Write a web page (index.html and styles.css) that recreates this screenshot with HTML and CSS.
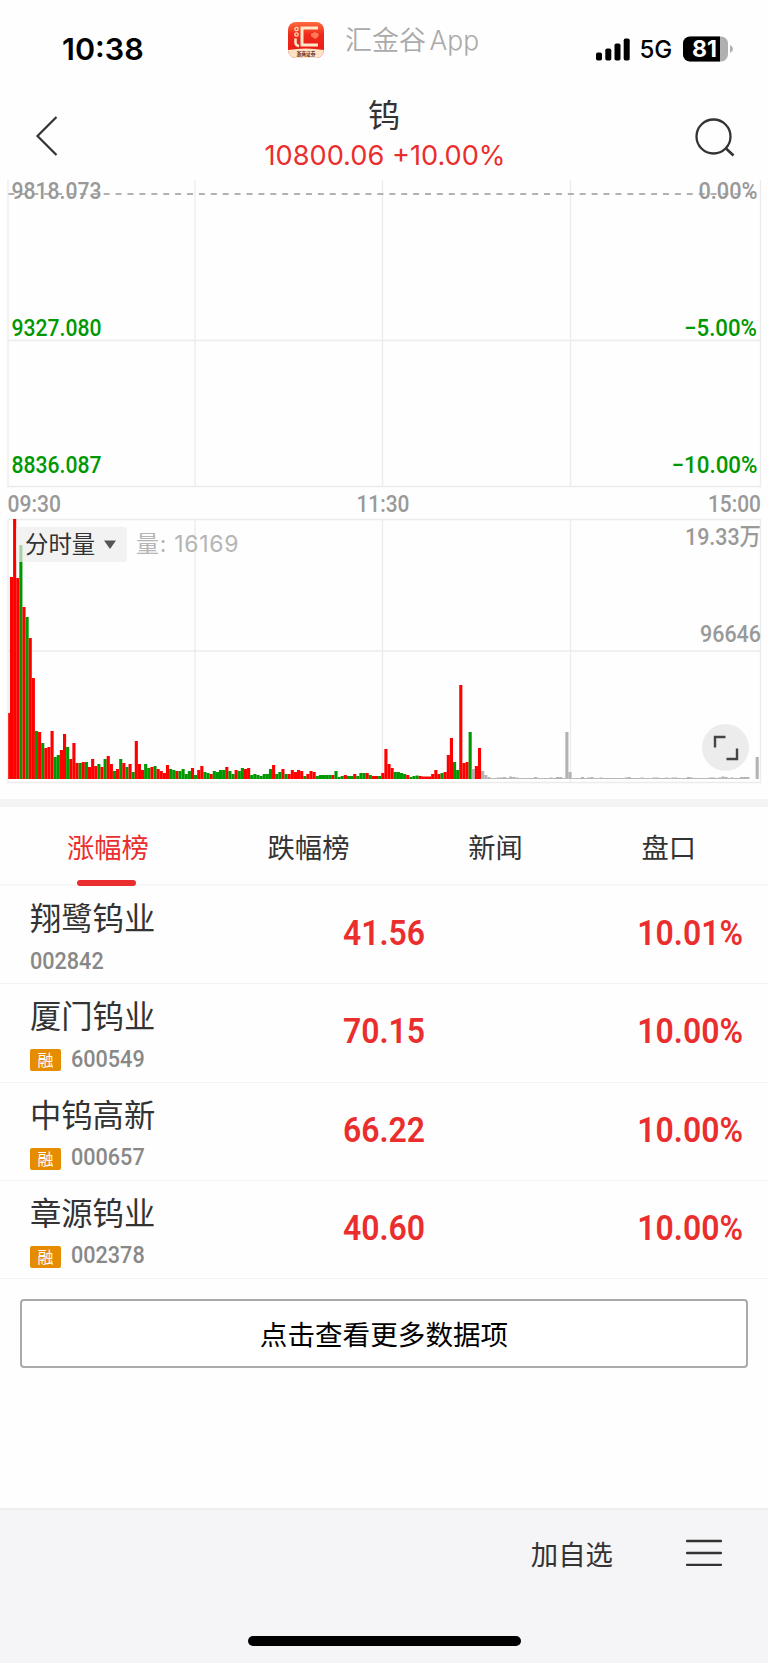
FILE: index.html
```
<!DOCTYPE html>
<html lang="zh-CN">
<head>
    <meta charset="UTF-8">
    <meta name="viewport" content="width=device-width, initial-scale=1.0">
    <title>钨</title>
    <link rel="stylesheet" href="styles.css">
</head>
<body>
    <div class="status-bar">
        <div class="clock">10:38</div>
        <div class="app-tag">
            <svg class="app-logo" width="36" height="36" viewBox="0 0 36 36">
                <defs>
                    <linearGradient id="logo-bg" x1="0" y1="0" x2="0" y2="1">
                        <stop offset="0" stop-color="#ff6a3c"/>
                        <stop offset="0.35" stop-color="#ee2a1c"/>
                        <stop offset="1" stop-color="#ea1512"/>
                    </linearGradient>
                    <clipPath id="logo-clip"><rect width="36" height="36" rx="8"/></clipPath>
                </defs>
                <g clip-path="url(#logo-clip)">
                    <rect width="36" height="36" fill="url(#logo-bg)"/>
                    <path d="M0 28 Q18 25 36 28 V36 H0 Z" fill="#fbe3c4"/>
                    <path d="M30 6 H14 V23 H30" fill="none" stroke="#ffe9c8" stroke-width="3"/>
                    <circle cx="8.500" cy="7" r="1.700" fill="none" stroke="#ffd9b5" stroke-width="1.300"/>
                    <circle cx="8.500" cy="12.500" r="1.700" fill="none" stroke="#ffd9b5" stroke-width="1.300"/>
                    <path d="M7.500 16.500 V20.500 Q7.500 23.500 11 24" fill="none" stroke="#ffe9c8" stroke-width="2.500"/>
                    <path d="M23 12 l4 -2 4 2 -1 3 -3 2 -4 -3z" fill="#ff7a58"/>
                </g>
                <text class="logo-text" x="18" y="33.800" textLength="19" lengthAdjust="spacingAndGlyphs" text-anchor="middle">浙商证券</text>
            </svg>
            <span class="app-name">汇金谷 <span>App</span></span>
        </div>
        <div class="signal">
            <svg width="34" height="23" viewBox="0 0 34 23">
                <rect x="0" y="14.500" width="6" height="8" rx="1.800"/>
                <rect x="9.300" y="10.500" width="6" height="12" rx="1.800"/>
                <rect x="18.500" y="5.500" width="6" height="17" rx="1.800"/>
                <rect x="27.700" y="0.500" width="6" height="22" rx="1.800"/>
            </svg>
            <span class="network">5G</span>
            <svg class="battery" width="50" height="26" viewBox="0 0 50 26">
                <defs>
                    <clipPath id="battery-clip"><rect x="0" y="0.500" width="45" height="25" rx="7"/></clipPath>
                </defs>
                <g clip-path="url(#battery-clip)">
                    <rect width="45" height="26" fill="#b0b0b0"/>
                    <rect width="37" height="26" fill="#000"/>
                </g>
                <path d="M47 9 Q50 10.500 50 13 Q50 15.500 47 17 Z" fill="#b0b0b0"/>
                <text class="battery-text" x="9" y="21.300" textLength="25" lengthAdjust="spacingAndGlyphs">81</text>
            </svg>
        </div>
    </div>

    <div class="nav">
        <svg width="42" height="42" viewBox="0 0 42 42">
            <path d="M21.500 2 L2.500 21 L21.500 40" fill="none" stroke="#333" stroke-width="2.200"/>
        </svg>
        <div class="nav-title">
            <h1>钨</h1>
            <div class="quote">10800.06 +10.00%</div>
        </div>
        <svg width="42" height="42" viewBox="0 0 42 42">
            <circle cx="20.500" cy="21.500" r="17" fill="none" stroke="#333" stroke-width="2.300"/>
            <path d="M32.500 33 L40.500 40.500" stroke="#333" stroke-width="2.600"/>
        </svg>
    </div>

    <div class="chart">
        <svg width="768" height="627" viewBox="0 172 768 627">
            <g class="grid">
                <path d="M8 180 V486.500 H760.500 V180 M195 180 V486.500 M382.500 180 V486.500 M570.500 180 V486.500 M8 340.500 H760.500"/>
                <path d="M8 519.500 H760.500 V782.500 H8 Z M195 519.500 V782.500 M382.500 519.500 V782.500 M570.500 519.500 V782.500 M8 651 H760.500"/>
            </g>
            <path class="base-line" d="M8.500 194 H758"/>
            <g class="axis">
                <text x="11.500" y="198.500" textLength="90" lengthAdjust="spacingAndGlyphs">9818.073</text>
                <text x="698.500" y="198.500" textLength="59" lengthAdjust="spacingAndGlyphs">0.00%</text>
                <text class="down" x="11.500" y="335.700" textLength="90" lengthAdjust="spacingAndGlyphs">9327.080</text>
                <text class="down" x="684" y="335.700" textLength="73" lengthAdjust="spacingAndGlyphs">−5.00%</text>
                <text class="down" x="11.500" y="472.700" textLength="90" lengthAdjust="spacingAndGlyphs">8836.087</text>
                <text class="down" x="671.500" y="472.700" textLength="86" lengthAdjust="spacingAndGlyphs">−10.00%</text>
                <text x="7.500" y="512" textLength="53.500" lengthAdjust="spacingAndGlyphs">09:30</text>
                <text x="356.500" y="512" textLength="53" lengthAdjust="spacingAndGlyphs">11:30</text>
                <text x="708" y="512" textLength="53" lengthAdjust="spacingAndGlyphs">15:00</text>
                <text x="685" y="544.700" textLength="76" lengthAdjust="spacingAndGlyphs">19.33万</text>
                <text x="700" y="641.700" textLength="61" lengthAdjust="spacingAndGlyphs">96646</text>
            </g>
            <g id="volume"></g>
        </svg>
        <div class="volume-head">
            <div class="volume-select"><span>分时量</span>
                <svg width="12" height="9" viewBox="0 0 12 9"><path d="M0 0.500 H12 L6 9 Z" fill="#555"/></svg>
            </div>
            <div class="volume-value">量: <span>16169</span></div>
        </div>
        <div class="expand">
            <svg width="26" height="26" viewBox="0 0 26 26">
                <path d="M2 12.500 V2 H12.500 M24 13.500 V24 H13.500" fill="none" stroke="#444" stroke-width="2.400"/>
            </svg>
        </div>
    </div>

    <div class="tabs">
        <div class="tab active">涨幅榜</div>
        <div class="tab">跌幅榜</div>
        <div class="tab">新闻</div>
        <div class="tab">盘口</div>
    </div>

    <div class="stocks">
        <div class="stock">
            <div class="info">
                <div class="name">翔鹭钨业</div>
                <div class="code"><span class="num">002842</span></div>
            </div>
            <div class="price num">41.56</div>
            <div class="change num">10.01%</div>
        </div>
        <div class="stock">
            <div class="info">
                <div class="name">厦门钨业</div>
                <div class="code"><span class="tag">融</span><span class="num">600549</span></div>
            </div>
            <div class="price num">70.15</div>
            <div class="change num">10.00%</div>
        </div>
        <div class="stock">
            <div class="info">
                <div class="name">中钨高新</div>
                <div class="code"><span class="tag">融</span><span class="num">000657</span></div>
            </div>
            <div class="price num">66.22</div>
            <div class="change num">10.00%</div>
        </div>
        <div class="stock">
            <div class="info">
                <div class="name">章源钨业</div>
                <div class="code"><span class="tag">融</span><span class="num">002378</span></div>
            </div>
            <div class="price num">40.60</div>
            <div class="change num">10.00%</div>
        </div>
    </div>

    <button class="more">点击查看更多数据项</button>

    <div class="footer">
        <div class="actions">
            <span>加自选</span>
            <svg width="36" height="28" viewBox="0 0 36 28">
                <path d="M1 2 H35 M1 14 H35 M1 25.800 H35" stroke="#333" stroke-width="2.300" stroke-linecap="round"/>
            </svg>
        </div>
        <div class="home-indicator"></div>
    </div>

    <script>
        // one bar per minute: r = up, g = down, x = no change yet
        const bars = `
            r66 r202 r260 r201 g234 r172 g162 r141 r101 g48 r47 g36 r31 r32 r48 g22 g24 r29 r45 g32
            r20 r36 r16 g16 r17 g17 r12 r20 r13 g15 r12 g20 r23 r15 g8 r10 g20 r16 g12 r15
            g7 r38 r15 r9 g15 g11 r12 g13 r10 r8 r6 r14 g10 g9 r8 g8 g10 g5 g8 r11
            g4 r9 r13 g7 g6 r5 g8 g7 g9 g9 r12 g8 g5 r9 g8 g11 r10 r11 g4 g5
            g4 g3 g5 g5 g10 r14 g5 g7 r10 g5 r5 r9 r7 r9 r8 g3 r5 r8 r7 g3
            g4 g4 g4 g4 r4 g8 g2 g3 r4 g3 g3 r5 g3 g6 g6 r6 g4 r3 r3 g3
            r6 r30 r15 r11 g7 g7 g6 g5 r4 g2 g3 g3.5 r3 r2.5 r2.5 r2.5 r5 r9 r5 g6
            r7 r24 r41 g17 g9 r94 r16 r17 g47 x10 r13 r31 x8 x4 x2 x1 x1 x1.5 x1.5 x2
            x1 x2.5 x2 x1.5 x1 x1 x1 x1 x1 x2 x1 x1 x1 x1 x1.5 x1 x2 x2 x1 x47
            x7 x1 x1 x1 x2 x1 x1.5 x2 x1 x1 x1.5 x1 x1 x1 x1 x1 x1 x1 x1.5 x2
            x1 x1 x1 x1.5 x1 x1 x1 x1.5 x1.5 x1 x1 x1.5 x1 x1.5 x1.5 x1 x1 x1 x2 x1.5
            x1 x1 x1 x1 x1 x1.5 x1.5 x1 x1.5 x2.5 x2 x1 x1.5 x1 x1 x2 x2 x2 x0 x0 x22
        `.trim().split(/\s+/);

        const colors = { r: '#ff0000', g: '#009800', x: '#b3b3b3' };
        const step = 3.12;
        const bottom = 779;

        document.getElementById('volume').innerHTML = bars.map((bar, i) => {
            const height = parseFloat(bar.slice(1));
            const x = Math.max(8.2, 6.84 + i * step);
            const right = 6.84 + (i + 1) * step;
            return `<rect x="${x}" y="${bottom - height}" width="${right - x}" height="${height}" fill="${colors[bar[0]]}"/>`;
        }).join('');
    </script>
</body>
</html>
```
FILE: styles.css
```
* {
    box-sizing: border-box;
}
body {
    margin: 0;
    width: 768px;
    height: 1663px;
    display: flex;
    flex-direction: column;
    background: #fefefe;
    color: #333;
    font-family: Inter, "Noto Sans CJK SC", sans-serif;
}
svg {
    display: block;
    flex-shrink: 0;
}

/* status bar */
.status-bar {
    height: 94px;
    display: flex;
    padding: 0 35px 0 62px;
    color: #000;
}
.clock {
    width: 226px;
    padding-top: 31px;
    font-size: 30.5px;
    line-height: 36px;
    font-weight: 600;
}
.app-tag {
    display: flex;
    width: 307.5px;
    padding-top: 22px;
    gap: 21px;
}
.logo-text {
    font-size: 5.5px;
    font-weight: 700;
    fill: #6b2c1c;
}
.app-name {
    font-size: 27px;
    line-height: 37px;
    font-weight: 350;
    color: #aaa;
    white-space: nowrap;
    word-spacing: -4px;
}
.app-name span {
    font-size: 26.4px;
}
.signal {
    display: flex;
    align-items: center;
    height: 26px;
    margin-top: 36px;
}
.network {
    width: 53.5px;
    padding-left: 10px;
    font-size: 24px;
    font-weight: 500;
}
.battery-text {
    font-size: 23px;
    font-weight: 700;
    fill: #fff;
}

/* title */
.nav {
    height: 78px;
    display: flex;
    justify-content: space-between;
    padding: 21px 33px 0 35px;
}
.nav-title {
    margin-top: -21px;
    text-align: center;
}
h1 {
    margin: 0 2px 0 0;
    font-size: 32px;
    line-height: 44px;
    font-weight: 400;
}
.quote {
    font-size: 27.2px;
    line-height: 34px;
    margin-top: 1px;
    color: #ea2e2e;
}

/* chart */
.chart {
    position: relative;
    height: 627px;
}
.grid path {
    fill: none;
    stroke: #ececec;
    stroke-width: 1.3;
}
.base-line {
    fill: none;
    stroke: #999;
    stroke-width: 1.5;
    stroke-dasharray: 6 5.9;
}
.axis text {
    font-family: Roboto, "Noto Sans CJK SC", sans-serif;
    font-size: 23.7px;
    font-weight: 500;
    fill: #999;
}
.axis .down {
    fill: #009800;
}
.volume-head {
    position: absolute;
    left: 16px;
    top: 355px;
    display: flex;
    gap: 9px;
    line-height: 35px;
}
.volume-select {
    display: flex;
    gap: 9px;
    width: 111px;
    height: 35px;
    padding-left: 9px;
    border-radius: 3px;
    background: rgba(236, 236, 236, 0.7);
    font-size: 23.4px;
    white-space: nowrap;
}
.volume-select svg {
    margin-top: 13px;
}
.volume-value {
    font-size: 23px;
    letter-spacing: 0.7px;
    color: #b5b5b5;
}
.expand {
    position: absolute;
    left: 702px;
    top: 552px;
    width: 47px;
    height: 47px;
    display: flex;
    align-items: center;
    justify-content: center;
    border-radius: 50%;
    background: #ececec;
}

/* tabs */
.tabs {
    height: 87px;
    display: flex;
    justify-content: space-between;
    padding: 0 72px 0 67px;
    border-top: 8px solid #f4f4f4;
    border-bottom: 2px solid #f6f6f6;
}
.tab {
    display: flex;
    flex-direction: column;
    align-items: center;
    font-size: 27.3px;
    line-height: 84px;
    height: 79px;
}
.tab.active {
    color: #ea2e2e;
}
.tab.active::after {
    content: "";
    width: 59px;
    height: 6px;
    margin: -11.5px 2px 0 0;
    border-radius: 3px;
    background: #ea2e2e;
}

/* stock list */
.num {
    font-family: Roboto, sans-serif;
    transform: scaleX(0.9);
}
.stock {
    height: 98.3px;
    display: grid;
    grid-template-columns: 313px 140px 1fr;
    padding: 0 25px 0 30px;
    border-bottom: 1px solid #f3f3f3;
}
.name {
    padding-top: 11px;
    font-size: 31.3px;
    line-height: 44px;
}
.code {
    display: flex;
    align-items: center;
    gap: 10px;
    height: 39px;
}
.code .num {
    font-size: 24px;
    font-weight: 500;
    color: #888;
    transform-origin: left;
}
.tag {
    width: 31px;
    height: 22px;
    margin-top: 3px;
    border-radius: 2px;
    background: #e68c00;
    color: #fff;
    font-size: 16px;
    line-height: 23px;
    text-align: center;
}
.price, .change {
    font-size: 35.5px;
    line-height: 95px;
    font-weight: 600;
    color: #ea2e2e;
}
.price {
    transform-origin: left;
}
.change {
    text-align: right;
    transform-origin: right;
}

.more {
    height: 69px;
    margin: 20px 20px 0;
    padding: 0 0 2px;
    border: 2px solid #aaa;
    border-radius: 4px;
    background: #fff;
    font-family: inherit;
    font-size: 27.6px;
    color: #000;
}

/* bottom bar */
.footer {
    height: 155px;
    margin-top: auto;
    border-top: 2px solid #efeeef;
    background: #f5f4f6;
}
.actions {
    display: flex;
    align-items: center;
    justify-content: flex-end;
    gap: 73px;
    height: 85px;
    padding-right: 46px;
    font-size: 27.4px;
}
.home-indicator {
    width: 273px;
    height: 10px;
    margin: 41px auto 0;
    border-radius: 5px;
    background: #000;
}
```
